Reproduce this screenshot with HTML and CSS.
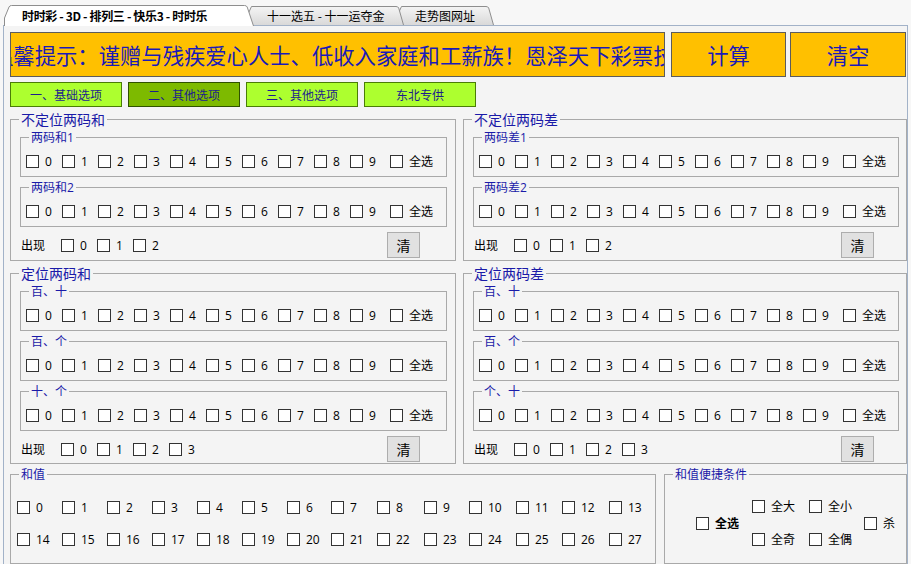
FILE: index.html
```html
<!DOCTYPE html>
<html lang="zh-CN">
<head>
<meta charset="utf-8">
<title>彩票辅助计算</title>
<link rel="stylesheet" href="styles.css">
</head>
<body>
<div class="tabs">
  <div class="tab tab-1">
    <svg class="tab-shape" viewBox="0 0 250 21" width="250" height="21"><path d="M0.5,21 V13 L5,2 Q5.7,0.5 7.5,0.5 H240.5 Q242.5,0.5 243.2,2 L249.5,21" fill="#ffffff" stroke="#8e8e8e"/></svg>
    <span class="tab-label bold">时时彩 - 3D - 排列三 - 快乐3 - 时时乐</span>
  </div>
  <div class="tab tab-2">
    <svg class="tab-shape" viewBox="0 0 161 20" width="161" height="20"><defs><linearGradient id="g2" x1="0" y1="0" x2="0" y2="1"><stop offset="0" stop-color="#f4f4f4"/><stop offset="1" stop-color="#d9d9d9"/></linearGradient></defs><path d="M0,20 L8.5,1.5 H153 Q155,1.5 155.7,3 L160.5,20" fill="url(#g2)" stroke="#8e8e8e"/></svg>
    <span class="tab-label">十一选五 - 十一运夺金</span>
  </div>
  <div class="tab tab-3">
    <svg class="tab-shape" viewBox="0 0 101 20" width="101" height="20"><defs><linearGradient id="g3" x1="0" y1="0" x2="0" y2="1"><stop offset="0" stop-color="#f4f4f4"/><stop offset="1" stop-color="#d9d9d9"/></linearGradient></defs><path d="M0,20 L8.5,1.5 H93 Q95,1.5 95.7,3 L100.5,20" fill="url(#g3)" stroke="#8e8e8e"/></svg>
    <span class="tab-label">走势图网址</span>
  </div>
</div>

<div class="panel">
  <div class="toprow">
    <div class="notice"><span class="notice-text">温馨提示：谨赠与残疾爱心人士、低收入家庭和工薪族！恩泽天下彩票技</span></div>
    <button class="bigbtn">计算</button>
    <button class="bigbtn bigbtn-2">清空</button>
  </div>

  <div class="optrow">
    <button class="opt">一、基础选项</button>
    <button class="opt opt-active">二、其他选项</button>
    <button class="opt">三、其他选项</button>
    <button class="opt">东北专供</button>
  </div>

  <div class="boxrow">
    <div class="box outer outer-1 outer-left">
      <span class="title title-big">不定位两码和</span>
      <div class="box inner first">
        <span class="title">两码和1</span>
        <div class="cbrow">
          <label class="cb"><input type="checkbox"><span>0</span></label><label class="cb"><input type="checkbox"><span>1</span></label><label class="cb"><input type="checkbox"><span>2</span></label><label class="cb"><input type="checkbox"><span>3</span></label><label class="cb"><input type="checkbox"><span>4</span></label><label class="cb"><input type="checkbox"><span>5</span></label><label class="cb"><input type="checkbox"><span>6</span></label><label class="cb"><input type="checkbox"><span>7</span></label><label class="cb"><input type="checkbox"><span>8</span></label><label class="cb"><input type="checkbox"><span>9</span></label><label class="cb all"><input type="checkbox"><span>全选</span></label>
        </div>
      </div>
      <div class="box inner">
        <span class="title">两码和2</span>
        <div class="cbrow">
          <label class="cb"><input type="checkbox"><span>0</span></label><label class="cb"><input type="checkbox"><span>1</span></label><label class="cb"><input type="checkbox"><span>2</span></label><label class="cb"><input type="checkbox"><span>3</span></label><label class="cb"><input type="checkbox"><span>4</span></label><label class="cb"><input type="checkbox"><span>5</span></label><label class="cb"><input type="checkbox"><span>6</span></label><label class="cb"><input type="checkbox"><span>7</span></label><label class="cb"><input type="checkbox"><span>8</span></label><label class="cb"><input type="checkbox"><span>9</span></label><label class="cb all"><input type="checkbox"><span>全选</span></label>
        </div>
      </div>
      <div class="appear">
        <span class="appear-label">出现</span>
        <label class="cb"><input type="checkbox"><span>0</span></label><label class="cb"><input type="checkbox"><span>1</span></label><label class="cb"><input type="checkbox"><span>2</span></label>
        <button class="clear">清</button>
      </div>
    </div>

    <div class="box outer outer-1 outer-right">
      <span class="title title-big">不定位两码差</span>
      <div class="box inner first">
        <span class="title">两码差1</span>
        <div class="cbrow">
          <label class="cb"><input type="checkbox"><span>0</span></label><label class="cb"><input type="checkbox"><span>1</span></label><label class="cb"><input type="checkbox"><span>2</span></label><label class="cb"><input type="checkbox"><span>3</span></label><label class="cb"><input type="checkbox"><span>4</span></label><label class="cb"><input type="checkbox"><span>5</span></label><label class="cb"><input type="checkbox"><span>6</span></label><label class="cb"><input type="checkbox"><span>7</span></label><label class="cb"><input type="checkbox"><span>8</span></label><label class="cb"><input type="checkbox"><span>9</span></label><label class="cb all"><input type="checkbox"><span>全选</span></label>
        </div>
      </div>
      <div class="box inner">
        <span class="title">两码差2</span>
        <div class="cbrow">
          <label class="cb"><input type="checkbox"><span>0</span></label><label class="cb"><input type="checkbox"><span>1</span></label><label class="cb"><input type="checkbox"><span>2</span></label><label class="cb"><input type="checkbox"><span>3</span></label><label class="cb"><input type="checkbox"><span>4</span></label><label class="cb"><input type="checkbox"><span>5</span></label><label class="cb"><input type="checkbox"><span>6</span></label><label class="cb"><input type="checkbox"><span>7</span></label><label class="cb"><input type="checkbox"><span>8</span></label><label class="cb"><input type="checkbox"><span>9</span></label><label class="cb all"><input type="checkbox"><span>全选</span></label>
        </div>
      </div>
      <div class="appear">
        <span class="appear-label">出现</span>
        <label class="cb"><input type="checkbox"><span>0</span></label><label class="cb"><input type="checkbox"><span>1</span></label><label class="cb"><input type="checkbox"><span>2</span></label>
        <button class="clear">清</button>
      </div>
    </div>
  </div>

  <div class="boxrow">
    <div class="box outer outer-2 outer-left">
      <span class="title title-big">定位两码和</span>
      <div class="box inner first">
        <span class="title">百、十</span>
        <div class="cbrow">
          <label class="cb"><input type="checkbox"><span>0</span></label><label class="cb"><input type="checkbox"><span>1</span></label><label class="cb"><input type="checkbox"><span>2</span></label><label class="cb"><input type="checkbox"><span>3</span></label><label class="cb"><input type="checkbox"><span>4</span></label><label class="cb"><input type="checkbox"><span>5</span></label><label class="cb"><input type="checkbox"><span>6</span></label><label class="cb"><input type="checkbox"><span>7</span></label><label class="cb"><input type="checkbox"><span>8</span></label><label class="cb"><input type="checkbox"><span>9</span></label><label class="cb all"><input type="checkbox"><span>全选</span></label>
        </div>
      </div>
      <div class="box inner">
        <span class="title">百、个</span>
        <div class="cbrow">
          <label class="cb"><input type="checkbox"><span>0</span></label><label class="cb"><input type="checkbox"><span>1</span></label><label class="cb"><input type="checkbox"><span>2</span></label><label class="cb"><input type="checkbox"><span>3</span></label><label class="cb"><input type="checkbox"><span>4</span></label><label class="cb"><input type="checkbox"><span>5</span></label><label class="cb"><input type="checkbox"><span>6</span></label><label class="cb"><input type="checkbox"><span>7</span></label><label class="cb"><input type="checkbox"><span>8</span></label><label class="cb"><input type="checkbox"><span>9</span></label><label class="cb all"><input type="checkbox"><span>全选</span></label>
        </div>
      </div>
      <div class="box inner">
        <span class="title">十、个</span>
        <div class="cbrow">
          <label class="cb"><input type="checkbox"><span>0</span></label><label class="cb"><input type="checkbox"><span>1</span></label><label class="cb"><input type="checkbox"><span>2</span></label><label class="cb"><input type="checkbox"><span>3</span></label><label class="cb"><input type="checkbox"><span>4</span></label><label class="cb"><input type="checkbox"><span>5</span></label><label class="cb"><input type="checkbox"><span>6</span></label><label class="cb"><input type="checkbox"><span>7</span></label><label class="cb"><input type="checkbox"><span>8</span></label><label class="cb"><input type="checkbox"><span>9</span></label><label class="cb all"><input type="checkbox"><span>全选</span></label>
        </div>
      </div>
      <div class="appear">
        <span class="appear-label">出现</span>
        <label class="cb"><input type="checkbox"><span>0</span></label><label class="cb"><input type="checkbox"><span>1</span></label><label class="cb"><input type="checkbox"><span>2</span></label><label class="cb"><input type="checkbox"><span>3</span></label>
        <button class="clear">清</button>
      </div>
    </div>

    <div class="box outer outer-2 outer-right">
      <span class="title title-big">定位两码差</span>
      <div class="box inner first">
        <span class="title">百、十</span>
        <div class="cbrow">
          <label class="cb"><input type="checkbox"><span>0</span></label><label class="cb"><input type="checkbox"><span>1</span></label><label class="cb"><input type="checkbox"><span>2</span></label><label class="cb"><input type="checkbox"><span>3</span></label><label class="cb"><input type="checkbox"><span>4</span></label><label class="cb"><input type="checkbox"><span>5</span></label><label class="cb"><input type="checkbox"><span>6</span></label><label class="cb"><input type="checkbox"><span>7</span></label><label class="cb"><input type="checkbox"><span>8</span></label><label class="cb"><input type="checkbox"><span>9</span></label><label class="cb all"><input type="checkbox"><span>全选</span></label>
        </div>
      </div>
      <div class="box inner">
        <span class="title">百、个</span>
        <div class="cbrow">
          <label class="cb"><input type="checkbox"><span>0</span></label><label class="cb"><input type="checkbox"><span>1</span></label><label class="cb"><input type="checkbox"><span>2</span></label><label class="cb"><input type="checkbox"><span>3</span></label><label class="cb"><input type="checkbox"><span>4</span></label><label class="cb"><input type="checkbox"><span>5</span></label><label class="cb"><input type="checkbox"><span>6</span></label><label class="cb"><input type="checkbox"><span>7</span></label><label class="cb"><input type="checkbox"><span>8</span></label><label class="cb"><input type="checkbox"><span>9</span></label><label class="cb all"><input type="checkbox"><span>全选</span></label>
        </div>
      </div>
      <div class="box inner">
        <span class="title">个、十</span>
        <div class="cbrow">
          <label class="cb"><input type="checkbox"><span>0</span></label><label class="cb"><input type="checkbox"><span>1</span></label><label class="cb"><input type="checkbox"><span>2</span></label><label class="cb"><input type="checkbox"><span>3</span></label><label class="cb"><input type="checkbox"><span>4</span></label><label class="cb"><input type="checkbox"><span>5</span></label><label class="cb"><input type="checkbox"><span>6</span></label><label class="cb"><input type="checkbox"><span>7</span></label><label class="cb"><input type="checkbox"><span>8</span></label><label class="cb"><input type="checkbox"><span>9</span></label><label class="cb all"><input type="checkbox"><span>全选</span></label>
        </div>
      </div>
      <div class="appear">
        <span class="appear-label">出现</span>
        <label class="cb"><input type="checkbox"><span>0</span></label><label class="cb"><input type="checkbox"><span>1</span></label><label class="cb"><input type="checkbox"><span>2</span></label><label class="cb"><input type="checkbox"><span>3</span></label>
        <button class="clear">清</button>
      </div>
    </div>
  </div>

  <div class="boxrow boxrow-bottom">
    <div class="box sum">
      <span class="title">和值</span>
      <div class="sumgrid">
        <label class="cb"><input type="checkbox"><span>0</span></label><label class="cb"><input type="checkbox"><span>1</span></label><label class="cb"><input type="checkbox"><span>2</span></label><label class="cb"><input type="checkbox"><span>3</span></label><label class="cb"><input type="checkbox"><span>4</span></label><label class="cb"><input type="checkbox"><span>5</span></label><label class="cb"><input type="checkbox"><span>6</span></label><label class="cb"><input type="checkbox"><span>7</span></label><label class="cb"><input type="checkbox"><span>8</span></label><label class="cb"><input type="checkbox"><span>9</span></label><label class="cb"><input type="checkbox"><span>10</span></label><label class="cb"><input type="checkbox"><span>11</span></label><label class="cb"><input type="checkbox"><span>12</span></label><label class="cb"><input type="checkbox"><span>13</span></label>
        <label class="cb"><input type="checkbox"><span>14</span></label><label class="cb"><input type="checkbox"><span>15</span></label><label class="cb"><input type="checkbox"><span>16</span></label><label class="cb"><input type="checkbox"><span>17</span></label><label class="cb"><input type="checkbox"><span>18</span></label><label class="cb"><input type="checkbox"><span>19</span></label><label class="cb"><input type="checkbox"><span>20</span></label><label class="cb"><input type="checkbox"><span>21</span></label><label class="cb"><input type="checkbox"><span>22</span></label><label class="cb"><input type="checkbox"><span>23</span></label><label class="cb"><input type="checkbox"><span>24</span></label><label class="cb"><input type="checkbox"><span>25</span></label><label class="cb"><input type="checkbox"><span>26</span></label><label class="cb"><input type="checkbox"><span>27</span></label>
      </div>
    </div>
    <div class="box quickbox">
      <span class="title">和值便捷条件</span>
      <div class="quick">
        <label class="cb quick-all"><input type="checkbox"><span class="bold">全选</span></label>
        <div class="quick-grid">
          <label class="cb"><input type="checkbox"><span>全大</span></label>
          <label class="cb"><input type="checkbox"><span>全小</span></label>
          <label class="cb"><input type="checkbox"><span>全奇</span></label>
          <label class="cb"><input type="checkbox"><span>全偶</span></label>
        </div>
        <label class="cb"><input type="checkbox"><span>杀</span></label>
      </div>
    </div>
  </div>
</div>
</body>
</html>
```

FILE: styles.css
```css
* { box-sizing: border-box; }
html, body { margin: 0; padding: 0; }
body {
  width: 911px;
  height: 564px;
  overflow: hidden;
  background: #f7f7f7;
  font-family: "Open Sans", "Noto Sans CJK SC", sans-serif;
  font-size: 12px;
  line-height: 15px;
  color: #000;
}
.bold { font-weight: bold; }

/* tabs */
.tabs {
  display: flex;
  align-items: flex-end;
  height: 25px;
  padding-left: 4px;
  position: relative;
  z-index: 2;
}
.tab {
  position: relative;
  flex: none;
  height: 20px;
}
.tab-shape {
  position: absolute;
  left: 0;
  top: 0;
  display: block;
}
.tab-label {
  position: relative;
  display: block;
  white-space: nowrap;
  color: #000;
  font-family: "Noto Sans CJK SC", sans-serif;
}
.tab-1 {
  width: 250px;
  height: 21px;
  margin-bottom: -1px;
  z-index: 3;
}
.tab-1 .tab-label {
  padding: 3px 0 0 18px;
  letter-spacing: -0.35px;
}
.tab-2 {
  width: 161px;
  margin-left: -11px;
  z-index: 2;
}
.tab-2 .tab-label { padding: 3px 0 0 24px; }
.tab-3 {
  width: 101px;
  margin-left: -11px;
  z-index: 1;
}
.tab-3 .tab-label { padding: 3px 0 0 22px; }

/* main panel */
.panel {
  margin-left: 3px;
  width: 905px;
  height: 560px;
  border: 1px solid #a2b2c8;
  background: #f4f4f4;
  padding: 6px 0 0 6px;
}

.toprow {
  display: flex;
  height: 45px;
}
.notice {
  width: 655px;
  flex: none;
  border: 1px solid #5c5c5c;
  background: #ffc000;
  overflow: hidden;
  white-space: nowrap;
  display: flex;
  align-items: center;
}
.notice-text {
  font-family: "Noto Sans CJK SC", sans-serif;
  font-size: 21.33px;
  line-height: 28px;
  color: #1a1ab8;
  margin-left: -19px;
  padding-top: 1px;
}
.bigbtn {
  flex: none;
  width: 115px;
  margin: 0 0 0 6px;
  padding: 0;
  border: 1px solid #5c5c5c;
  background: #ffc000;
  font-family: "Noto Sans CJK SC", sans-serif;
  font-size: 21.33px;
  line-height: 28px;
  color: #1a1ab8;
}
.bigbtn-2 {
  width: 116px;
  margin-left: 4px;
}

.optrow {
  display: flex;
  gap: 6px;
  margin-top: 5px;
}
.opt {
  width: 112px;
  height: 25px;
  margin: 0;
  padding: 0;
  border: 1px solid #4a7d06;
  background: #adff2f;
  font-family: "Noto Sans CJK SC", sans-serif;
  font-size: 12px;
  line-height: 15px;
  color: #1e1e8c;
}
.opt-active {
  background: #7dba00;
  border-color: #2f5200;
}

/* group boxes */
.boxrow {
  display: flex;
  margin-top: 12px;
}
.boxrow-bottom { margin-top: 10px; }
.box {
  border: 1px solid #a9a9a9;
  display: flex;
  flex-direction: column;
  flex: none;
}
.title {
  align-self: flex-start;
  background: #f4f4f4;
  padding: 0 2px;
  margin: -8px 0 0 8px;
  color: #1a1aa8;
  font-size: 12px;
  line-height: 15px;
  white-space: nowrap;
}
.title-big {
  font-size: 14px;
  line-height: 17px;
  margin-top: -9px;
}
.outer-1 { height: 142px; }
.outer-2 { height: 191px; }
.outer-left { width: 446px; }
.outer-right { width: 444px; margin-left: 7px; }

.inner {
  height: 40px;
  margin: 10px 0 0 9px;
}
.inner.first { margin-top: 9px; }
.outer-left .inner { width: 427px; }
.outer-right .inner { width: 426px; }

.cbrow {
  display: flex;
  align-items: center;
  height: 13px;
  margin-top: 10px;
  padding-left: 5px;
}
.cb {
  display: flex;
  align-items: center;
  flex: none;
  width: 36px;
  height: 13px;
  white-space: nowrap;
}
.cb input {
  -webkit-appearance: none;
  appearance: none;
  flex: none;
  width: 13px;
  height: 13px;
  margin: 0 6px 0 0;
  border: 1px solid #333;
  border-radius: 0;
  background: #fff;
}
.cb.all {
  width: auto;
  margin-left: 4px;
}

.appear {
  display: flex;
  align-items: center;
  height: 26px;
  margin-top: 5px;
  padding-left: 10px;
}
.appear-label {
  width: 40px;
  flex: none;
}
.clear {
  margin: 0 35px 0 auto;
  width: 33px;
  height: 26px;
  padding: 0;
  border: 1px solid #adadad;
  background: #e1e1e1;
  font-family: "Noto Sans CJK SC", sans-serif;
  font-size: 14px;
  line-height: 18px;
  color: #000;
}
.outer-right .clear { margin-right: 32px; }

/* bottom */
.sum {
  width: 646px;
  height: 90px;
}
.sumgrid {
  display: grid;
  grid-template-columns: 45px 45px 45px 45px 45px 45px 44px 46px 47px 45px 47px 46px 47px 46px;
  row-gap: 19px;
  margin-top: 19px;
  padding-left: 6px;
}
.sumgrid .cb { width: auto; }

.quickbox {
  width: 243px;
  height: 90px;
  margin-left: 8px;
}
.quick {
  display: flex;
  align-items: center;
  height: 46px;
  margin-top: 18px;
  padding-left: 31px;
}
.quick .cb { width: auto; }
.quick-all { width: 56px !important; }
.quick-grid {
  display: grid;
  grid-template-columns: 57px 55px;
  row-gap: 20px;
}
```
